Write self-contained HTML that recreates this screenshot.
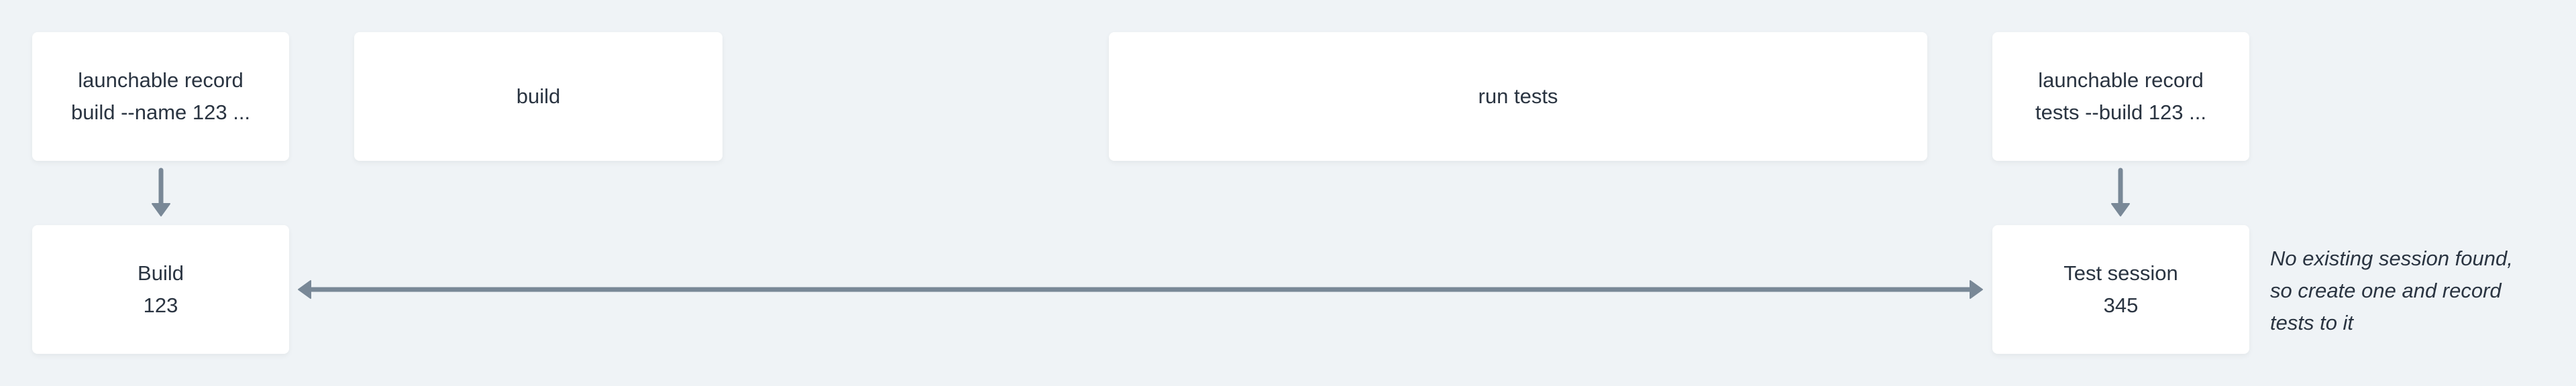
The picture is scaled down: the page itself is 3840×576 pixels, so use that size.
<!DOCTYPE html>
<html><head><meta charset="utf-8"><style>
html,body{margin:0;padding:0;}
body{width:3840px;height:576px;background:#eff3f6;position:relative;overflow:hidden;font-family:"Liberation Sans",sans-serif;color:#2a3441;}
.b{position:absolute;background:#fff;border-radius:8px;box-shadow:0 3px 8px rgba(0,0,0,0.05);display:flex;align-items:center;justify-content:center;text-align:center;font-size:31px;line-height:48px;}
.note{position:absolute;left:3384px;top:362px;font-size:31px;line-height:48px;font-style:italic;color:#2a3441;}
</style></head><body>
<div class="b" style="left:48px;top:48px;width:383px;height:192px;">launchable record<br>build --name 123 ...</div>
<div class="b" style="left:528px;top:48px;width:549px;height:192px;">build</div>
<div class="b" style="left:1653px;top:48px;width:1220px;height:192px;">run tests</div>
<div class="b" style="left:2970px;top:48px;width:383px;height:192px;">launchable record<br>tests --build 123 ...</div>
<div class="b" style="left:48px;top:336px;width:383px;height:192px;">Build<br>123</div>
<div class="b" style="left:2970px;top:336px;width:383px;height:192px;">Test session<br>345</div>
<div class="note">No existing session found,<br>so create one and record<br>tests to it</div>
<svg width="3840" height="576" style="position:absolute;left:0;top:0" xmlns="http://www.w3.org/2000/svg">
<g fill="#798897" stroke="#798897">
<line x1="240" y1="254" x2="240" y2="306" stroke-width="7" stroke-linecap="round"/>
<path d="M227 304 L253 304 L240 322 Z" stroke-width="2" stroke-linejoin="round"/>
<line x1="3161" y1="254" x2="3161" y2="306" stroke-width="7" stroke-linecap="round"/>
<path d="M3148 304 L3174 304 L3161 322 Z" stroke-width="2" stroke-linejoin="round"/>
<line x1="460" y1="432" x2="2940" y2="432" stroke-width="7"/>
<path d="M463 419 L463 445 L445 432 Z" stroke-width="2" stroke-linejoin="round"/>
<path d="M2937 419 L2937 445 L2955 432 Z" stroke-width="2" stroke-linejoin="round"/>
</g></svg>
</body></html>
